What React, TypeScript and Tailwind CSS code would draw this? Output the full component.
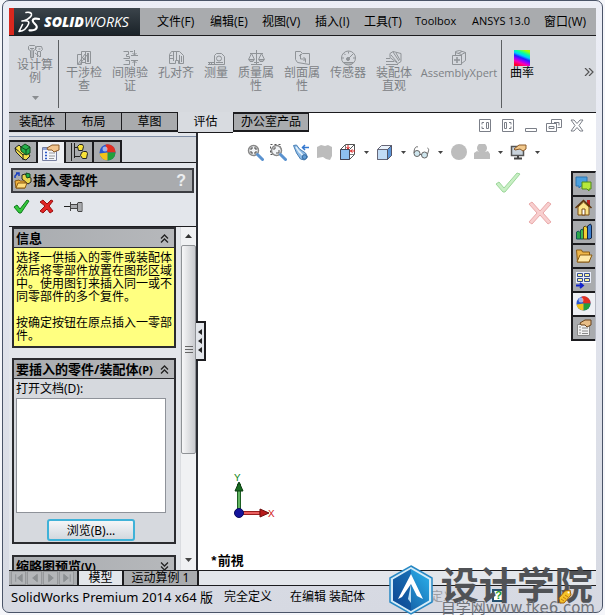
import type { ReactNode } from "react";

const GRAY = "#8f9397";

function Svg({ w = 16, h = 16, vb, children, className = "" }: { w?: number; h?: number; vb?: string; children: ReactNode; className?: string }) {
  return (
    <svg width={w} height={h} viewBox={vb ?? `0 0 ${w} ${h}`} fill="none" className={`shrink-0 ${className}`} aria-hidden="true">
      {children}
    </svg>
  );
}

function Logo() {
  return (
    <div className="flex h-full w-[131px] shrink-0 items-center border-l-[5px] border-[#d9281e] bg-gradient-to-b from-[#3b444b] to-[#1b2329] pl-1">
      <Svg w={22} h={22}>
        <g stroke="#fff" strokeLinecap="round" strokeLinejoin="round">
          <path d="M8 1.500C11 1 14 1.500 13.500 4 13 6 10 8 7 9.500" strokeWidth="1.600" />
          <path d="M4 10C8 9 12 10 10.500 13 9 17 5 20 1 20.500L4.500 13.500" strokeWidth="1.600" />
          <path d="M21 8c-3-.8-6-.5-6.300 1.500C14.500 12 19 13.500 18.800 16 18.500 19 15 19.600 11.500 19.300" strokeWidth="2.200" />
        </g>
      </Svg>
      <span className="pl-1 font-['Open_Sans','Noto_Sans',sans-serif] text-[14px] leading-[20px] text-white italic">
        <b className="font-extrabold">SOLID</b>WORKS
      </span>
    </div>
  );
}

const menus = [
  { t: "文件(F)", w: "w-[53px]" },
  { t: "编辑(E)", w: "w-[52px]" },
  { t: "视图(V)", w: "w-[53px]" },
  { t: "插入(I)", w: "w-[49px]" },
  { t: "工具(T)", w: "w-[51px]" },
  { t: "Toolbox", w: "w-[57px]", small: true },
  { t: "ANSYS 13.0", w: "w-[72px]", small: true },
  { t: "窗口(W)", w: "w-[48px]" },
];

const g = { stroke: GRAY, strokeWidth: 1 };

const icons: Record<string, ReactNode> = {
  study: (
    <g {...g}>
      <path d="M1.500 1.500l1-1h5l1 1v3l-2 1v7h-3v-7l-2-1zM3 3.500h4M5 3v9M9.500 1.500h5l1 3-2 2h-3l-2-2zM11.500 4h2M10.500 7v5M13.500 7v5M8 8l5 4" />
    </g>
  ),
  interference: (
    <g {...g}>
      <path d="M1.500 4.500h4v10h-4zM5.500 1.500h4v11h-4zM9.500 1.500h5v12h-5zM2 14L9 4M3 15l8-10M11.500 3v9M12.500 3v9M6 7l3 3" />
    </g>
  ),
  clearance: (
    <g {...g}>
      <path d="M1.500 1.500h5v3h-2v2h3v2h-6M1.500 14.500h6v-4h-4M9 5.500h7M9 10.500h7M12.500 0v5M12.500 11v5M10.500 3l2 2 2-2M10.500 13l2-2 2 2M8 1.500h3" />
    </g>
  ),
  hole: (
    <g {...g}>
      <path d="M1.500 13.500v-9l2-3h8l4 4v8h-5v-3h-3v3zM5.500 2v9M8.500 2v8M11.500 5v8M13.500 6v6M1.500 5.500h3M1.500 8.500h4" />
    </g>
  ),
  measure: (
    <g {...g}>
      <path d="M6.500 14.500v-9l2-2h5l3 3v8zM0 14.500h7M0 12.500h6M1.500 12v2M3.500 12v2" />
      <circle cx="11" cy="8.500" r="2.500" />
      <path d="M8 12.500h7" />
    </g>
  ),
  mass: (
    <g {...g}>
      <path d="M8.500 0v14M2 3.500h13M3.500 3.500l-3 6h6zM13.500 3.500l-3 6h6zM1 10h5l-1 1.500H2zM11 10h5l-1 1.500h-3zM3 14.500h11M6 12.500h5" />
    </g>
  ),
  section: (
    <g {...g}>
      <path d="M1.500 1.500h5l2 2h7v11l-12-2-2-3zM5 6l3-2M6.500 4v5h5M9.500 7l2 2-2 2M11.500 12.500V9" />
    </g>
  ),
  sensor: (
    <g {...g}>
      <circle cx="8.500" cy="8" r="7" />
      <path d="M8 9l5-5M8.500 1.500v2M2 8h2M15 8h-2M4 3.500L5.500 5M3.500 12.500h10M5 14h7" />
      <circle cx="8" cy="9" r="1.500" fill={GRAY} />
    </g>
  ),
  visual: (
    <g {...g}>
      <path d="M4 3.500l3-2 8 2v8l-3 2-8-6zM7 2l6 9M10 3l4 7M5 5l6 7M0 8.500h4M0 11.500h8M0 14.500h12" />
    </g>
  ),
  xpert: (
    <g {...g}>
      <path d="M1.500 5.500h9v9h-9zM4.500 5V1.500l4-1 6 2v8l-4 3M4.500 2.500l6 2 4-2M10.500 4.500v2M7 3.500l4-2" />
      <path d="M3 10h6M6 7v6" strokeWidth="1.500" />
    </g>
  ),
};

const tools = [
  { i: "interference", l: ["干涉检", "查"], w: "w-[46px]" },
  { i: "clearance", l: ["间隙验", "证"], w: "w-[46px]" },
  { i: "hole", l: ["孔对齐"], w: "w-[46px]" },
  { i: "measure", l: ["测量"], w: "w-[34px]" },
  { i: "mass", l: ["质量属", "性"], w: "w-[46px]" },
  { i: "section", l: ["剖面属", "性"], w: "w-[46px]" },
  { i: "sensor", l: ["传感器"], w: "w-[46px]" },
  { i: "visual", l: ["装配体", "直观"], w: "w-[46px]" },
  { i: "xpert", l: ["AssemblyXpert"], w: "w-[84px]" },
];

function Ribbon() {
  return (
    <div className="flex h-[76px] shrink-0 bg-[#d6d9de] text-[12px] leading-[13px] text-[#7d8185]">
      <button className="flex w-[49px] flex-col items-center pt-[9px] pl-[3px]">
        <Svg w={17} h={13}>{icons.study}</Svg>
        <span className="flex flex-col"><span>设计算</span><span>例</span></span>
        <Svg w={7} h={4} className="mt-3"><path d="M0 0h7L3.500 4z" fill="#8a8d90" /></Svg>
      </button>
      <div className="my-1 mr-[2px] w-px bg-[#5c5f62]" />
      {tools.map((t) => (
        <button key={t.i} className={`flex shrink-0 flex-col items-center pt-[14px] ${t.w}`}>
          <Svg w={17} h={16}>{icons[t.i]}</Svg>
          {t.l.map((x) => (
            <span key={x} className={t.i === "xpert" ? "font-['Open_Sans','Noto_Sans',sans-serif] text-[11px]" : ""}>{x}</span>
          ))}
        </button>
      ))}
      <div className="my-1 w-px bg-[#5c5f62]" />
      <button className="flex w-10 shrink-0 flex-col items-center pt-[14px] text-black">
        <Svg>
          <defs>
            <linearGradient id="curv" x1="0.700" y1="0" x2="0.300" y2="1">
              <stop offset="0" stopColor="#af0" /><stop offset=".22" stopColor="#0fa" /><stop offset=".36" stopColor="#0cf" />
              <stop offset=".5" stopColor="#22f" /><stop offset=".65" stopColor="#90f" /><stop offset=".8" stopColor="#f0a" /><stop offset="1" stopColor="#f02" />
            </linearGradient>
          </defs>
          <path d="M0 0h16v16H0z" fill="url(#curv)" />
        </Svg>
        <span>曲率</span>
      </button>
      <button className="ml-auto flex w-[14px] items-center justify-center pb-1" aria-label="更多">
        <Svg w={10} h={8}><path d="M1 0l4 4-4 4M5 0l4 4-4 4" stroke="#555" strokeWidth="1.200" /></Svg>
      </button>
    </div>
  );
}

function Tabs() {
  const base = "h-5 shrink-0 border-r border-b-2 border-[#1c1c1f] bg-[#a9abae] text-center";
  return (
    <div className="flex h-[21px] shrink-0 bg-white text-[12px] leading-[16px] text-black">
      <div className="flex bg-[#d8dbe0]">
        <button className={`w-[57px] border-t ${base}`}>装配体</button>
        <button className={`w-14 border-t ${base}`}>布局</button>
        <button className={`w-14 border-t ${base}`}>草图</button>
        <button className="h-[22px] w-[55px] shrink-0 border-b-2 border-[#1c1c1f] bg-[#d8dbe0]">评估</button>
      </div>
      <button className={`w-[76px] border-t-2 border-l ${base}`}>办公室产品</button>
      <div className="flex flex-1 items-end justify-end gap-2 border-t border-[#1c1c1f] pr-3 pb-px">
        {[0, 1].map((k) => (
          <button key={k} aria-label={k ? "右侧窗格" : "左侧窗格"} className={k ? "mr-px" : "mr-px"}>
            <Svg w={14} h={13} className={k ? "-scale-x-100" : ""}>
              <path d="M1.500.5h11v12h-11zM4 5.500V3.500h2M4 7.500v2h2M8.500 3.500h2v6h-2z" stroke="#7b7f88" />
            </Svg>
          </button>
        ))}
        <button aria-label="最小化"><Svg w={14} h={13}><path d="M1.500 9.500h11v3h-11z" stroke="#7b7f88" /></Svg></button>
        <button aria-label="还原"><Svg w={16} h={13}><path d="M5.500 4V.5h10v8h-4M8 3.500h5v3M.5 4.500h10v8H.5zM3 7.500h5v2H3z" stroke="#7b7f88" /></Svg></button>
        <button aria-label="关闭"><Svg w={14} h={13}><path d="M1 1h3l3 3.500L10 1h3L9 6.500l4 5.500h-3L7 8.500 4 12H1l4-5.500z" stroke="#7b7f88" /></Svg></button>
      </div>
    </div>
  );
}

function PartIcon() {
  return (
    <>
      <path d="M1 5l4-3 2 2v3l7 3 2 3-4 4-3-1-7-7z" fill="#f3e04c" stroke="#222" />
      <path d="M1 5l8 7v5M9 12l5-3" stroke="#222" />
      <path d="M7 4l4-3 5 3v6l-4 2-5-4z" fill="#23b04a" stroke="#124a1c" />
      <path d="M7 4l5 3v5M12 7l4-3" stroke="#124a1c" />
    </>
  );
}

function HandList() {
  return (
    <>
      <path d="M.5 3.500h14v13H.5z" fill="#f3f5fb" stroke="#777fa0" />
      <path d="M1 4h13v2H1z" fill="#8fa4d8" />
      <path d="M3 8.500h2M3 11.500h2M3 14.500h2" stroke="#2c59c8" strokeWidth="1.600" />
      <path d="M7 9h6M7 12h6M7 14.500h5" stroke="#9a9a9a" />
      <path d="M5 4l5-3h7v5l-5 2-2-2H6z" fill="#f2c48d" stroke="#8a5a2a" />
    </>
  );
}

function Ball({ r = 8 }: { r?: number }) {
  const c = 8.5;
  return (
    <>
      <circle cx={c} cy={c} r={r} fill="#2a56d0" />
      <path d={`M${c} ${c}L${c - 2} ${c - r}A${r} ${r} 0 0 1 ${c + r} ${c}z`} fill="#e22f22" />
      <path d={`M${c} ${c}L${c + r} ${c}A${r} ${r} 0 0 1 ${c} ${c + r}z`} fill="#22a03a" />
      <path d={`M${c} ${c}L${c} ${c + r}A${r} ${r} 0 0 1 ${c - r} ${c + 1}z`} fill="#f2c21a" />
      <circle cx="6" cy="5" r="2.500" fill="#fff" opacity=".55" />
    </>
  );
}

function Chevrons({ up = true }: { up?: boolean }) {
  return (
    <Svg w={9} h={9}>
      <path d={up ? "M1 4.500L4.500 1 8 4.500M1 8.500L4.500 5 8 8.500" : "M1 .5L4.500 4 8 .5M1 4.500L4.500 8 8 4.500"} stroke="#222" strokeWidth="1.300" />
    </Svg>
  );
}

function GroupHeader({ children, up = true }: { children: ReactNode; up?: boolean }) {
  return (
    <button className="flex h-[18px] w-full shrink-0 items-center justify-between bg-gradient-to-r from-[#a9acb0] to-[#b6b8bb] pr-[5px] pl-[2px] text-left text-[13px] font-bold whitespace-nowrap">
      <span>{children}</span>
      <Chevrons up={up} />
    </button>
  );
}

function Panel() {
  const tab = "flex w-7 items-center justify-center border-t-2 border-r-2 border-[#1c1c1f]";
  return (
    <aside className="relative flex w-[189px] shrink-0 flex-col border-r-2 border-[#2b2d33] bg-[#e3e6eb] text-[12px] leading-[13px] text-black">
      <div className="mt-[3px] h-px shrink-0 bg-[#7f8ea6]" />
      <div className="flex h-[26px] shrink-0 items-end border-b border-[#1c1c1f] bg-[#d6d9de]">
        <div className="flex h-[22px] border-l border-[#1c1c1f]">
          <button className={`${tab} bg-[#a9abae]`} aria-label="特征"><Svg w={18} h={18}><PartIcon /></Svg></button>
          <button className={`${tab} h-[23px] bg-[#eef0f4]`} aria-label="属性"><Svg w={18} h={17}><HandList /></Svg></button>
          <button className={`${tab} bg-[#a9abae]`} aria-label="配置">
            <Svg w={18} h={18}>
              <path d="M1.500 0v18M4.500 0v15M5 4.500h3M5 13.500h5" stroke="#222" />
              <path d="M7.500 3.500l2-2h3l1 2-1 4h-4zM11.500 9.500l2-1h3l1 2-1 5h-4l-2-3z" fill="#f8e23a" stroke="#222" />
            </Svg>
          </button>
          <button className={`${tab} bg-[#a9abae]`} aria-label="外观"><Svg w={17} h={17}><Ball /></Svg></button>
        </div>
      </div>
      <div className="mx-[2px] mt-[5px] flex h-[25px] shrink-0 items-center border-2 border-[#3c3d42] bg-[#a9abae] pr-[6px] pl-px">
        <Svg w={18} h={18}>
          <path d="M1 6V4l3-3M2 1h3v3" stroke="#1a3fc0" strokeWidth="1.500" />
          <path d="M8 3l3-1 2 2 4 2v4l-3 2-6-5z" fill="#e8d54a" stroke="#222" />
          <path d="M12 1l4 1v3l-3 1-1-2z" fill="#23b04a" stroke="#124a1c" />
          <path d="M1 9l4-1 1 1h5v7H2z" fill="#f3b33c" stroke="#8a5a12" />
          <path d="M2 16l2-5h9l-2 5z" fill="#ffdc7a" stroke="#8a5a12" />
        </Svg>
        <h2 className="pl-px text-[13px] font-bold">插入零部件</h2>
        <button className="ml-auto font-['Liberation_Sans',sans-serif] text-[16px] font-bold text-[#eceef0]">?</button>
      </div>
      <div className="flex h-[34px] shrink-0 items-start gap-[9px] border-b border-[#1c1c1f] pt-[6px] pl-[4px]">
        <button aria-label="确定"><Svg w={17} h={15}><path d="M1 8l3-2 3 4L14 1l2 1L8 14H6z" fill="#35c83a" stroke="#0d7a1c" /></Svg></button>
        <button aria-label="取消"><Svg w={15} h={15}><path d="M1 3l3-2 4 4 4-4 2 1-4 5 4 5-3 2-3-4-4 4-3-2 5-5z" fill="#e02525" stroke="#9a0f0f" /></Svg></button>
        <button aria-label="图钉" className="pl-px">
          <Svg w={19} h={15}><path d="M0 7.500h6" stroke="#222" /><path d="M6.500 3v9M7 5.500h6M7 9.500h6M13.500 4v8M14 3.500h4v9h-4z" stroke="#444" /><path d="M7 6h6v3H7zM14 4h3v8h-3z" fill="#a8aaad" /></Svg>
        </button>
      </div>
      <div className="flex min-h-0 flex-1">
        <div className="flex min-w-0 flex-1 flex-col overflow-hidden pl-[3px]">
          <section className="shrink-0 border-2 border-[#2b2c30]">
            <GroupHeader>信息</GroupHeader>
            <div className="h-[99px] border-t border-[#2b2c30] bg-[#ffff80] pt-[3px] pl-[2px] whitespace-nowrap">
              <p>选择一供插入的零件或装配体</p>
              <p>然后将零部件放置在图形区域</p>
              <p>中。使用图钉来插入同一或不</p>
              <p>同零部件的多个复件。</p>
              <p className="pt-[13px]">按确定按钮在原点插入一零部</p>
              <p>件。</p>
            </div>
          </section>
          <section className="mt-[10px] shrink-0 border-2 border-[#2b2c30] bg-[#d6d9de]">
            <GroupHeader>要插入的零件/装配体<span className="text-[11px]">(P)</span></GroupHeader>
            <div className="flex h-[164px] flex-col border-t border-[#2b2c30] px-[2px] pt-[3px]">
              <label htmlFor="docs">打开文档(D):</label>
              <select id="docs" size={5} className="mt-[3px] h-[115px] w-[150px] appearance-none border border-[#8e9299] bg-white" />
              <button className="mt-[6px] ml-[31px] h-[22px] w-[88px] rounded-[3px] border-2 border-[#3fb2d8] bg-gradient-to-b from-[#f4f6f8] to-[#d3d8de]">浏览(B)...</button>
            </div>
          </section>
          <section className="mt-[11px] min-h-0 flex-1 overflow-hidden border-2 border-b-0 border-[#2b2c30]">
            <GroupHeader up={false}>缩略图预览<span className="text-[11px]">(V)</span></GroupHeader>
          </section>
        </div>
        <div className="ml-[4px] flex w-4 flex-col items-center border-l border-[#dadce0] bg-[#f0f1f3]">
          <Svg w={7} h={18}><path d="M0 11h7L3.500 7z" fill="#333" /></Svg>
          <div className="flex h-[209px] w-[15px] items-center justify-center rounded-[2px] border border-[#8f9296] bg-gradient-to-r from-[#f7f7f8] to-[#c9cbcf]">
            <Svg w={8} h={8}><path d="M0 .5h8M0 3.500h8M0 6.500h8" stroke="#666" /></Svg>
          </div>
          <Svg w={7} h={18} className="mt-auto"><path d="M0 6h7l-3.500 4z" fill="#444" /></Svg>
        </div>
      </div>
      <button aria-label="折叠面板" className="absolute top-[188px] -right-[10px] z-10 flex h-[40px] w-[10px] items-center justify-center border-2 border-l-0 border-[#1c1c1f] bg-[#e3e6eb]">
        <Svg w={4} h={24}><path d="M4 0v6L0 3zM4 9v6l-4-3zM4 18v6l-4-3z" fill="#222" /></Svg>
      </button>
    </aside>
  );
}

function Down() {
  return <Svg w={5} h={3}><path d="M0 0h5L2.500 3z" fill="#444" /></Svg>;
}

function ViewTools() {
  const lens = (
    <>
      <circle cx="6.500" cy="6.500" r="5" fill="#f2f4f6" stroke="#888" strokeWidth="1.500" />
      <path d="M10.500 10.500l5 5" stroke="#5a92cf" strokeWidth="3" strokeLinecap="round" />
    </>
  );
  const cell = "flex w-[23px] justify-center";
  const arrow = "flex w-[14px] justify-center";
  return (
    <div className="flex h-[38px] shrink-0 items-center pl-[46px]">
      <button className={cell} aria-label="整屏显示全图"><Svg w={17} h={17}>{lens}<path d="M4 6V4h2M9 7v2H7M7 4h2v2M4 7v2h2" stroke="#444" /></Svg></button>
      <button className={cell} aria-label="局部放大"><Svg w={17} h={17}><path d="M.5.500h10v10H.5z" stroke="#555" strokeDasharray="2 2" />{lens}<path d="M4 6V4h2M9 6v3H6" stroke="#555" /></Svg></button>
      <button className={cell} aria-label="上一视图">
        <Svg w={17} h={17}><path d="M.5 1.500l3-.5 3 4 6 4 2 4-3 3-4-1-4-6z" fill="#8dbbe6" stroke="#4a7fb4" /><path d="M3 3l4 6M6 7l5 6" stroke="#e4f1fb" strokeWidth="1.500" /><circle cx="11.500" cy="13" r="2.300" fill="#5d9ad4" stroke="#37699c" /><path d="M9 3.500h7M12 1L9.500 3.500 12 6" stroke="#3478d0" strokeWidth="1.500" /></Svg>
      </button>
      <button className={cell} aria-label="剖面视图"><Svg w={15} h={16}><path d="M0 3l4-2 4 1 3-1 4 2v9l-2 4-4-1-3-2-6 1z" fill="#bcbcbc" /></Svg></button>
      <button className={cell} aria-label="视图定向">
        <Svg w={17} h={17}><path d="M1.500 5.500l5-5h9v10l-5 5h-9zM10.500 5.500l5-5" stroke="#555" /><path d="M6.500.500v5M15.500 10.500h-5" stroke="#777" /><path d="M1.500 5.500h9v10h-9z" fill="#8dbff0" stroke="#445" /><path d="M9 1v4M7.500 3L9 5l1.500-2M16 7h-5M13.500 5.500L11.500 7l2 1.500" stroke="#d22" /></Svg>
      </button>
      <span className={arrow}><Down /></span>
      <button className={cell} aria-label="显示样式">
        <Svg w={17} h={17}><path d="M1.500 5.500l4-4h10v10l-4 4h-10z" fill="#e9f2fb" stroke="#667" /><path d="M1.500 5.500h10v10h-10z" fill="#c2dcf6" stroke="#667" /><path d="M11.500 5.500l4-4v10l-4 4z" fill="#5b95d8" stroke="#556" /></Svg>
      </button>
      <span className={arrow}><Down /></span>
      <button className={cell} aria-label="隐藏/显示项目">
        <Svg w={17} h={14}><circle cx="4" cy="8.500" r="3" fill="#cfe6ee" stroke="#666" /><circle cx="11.500" cy="10" r="3" fill="#cfe6ee" stroke="#666" /><path d="M7 9.500h1.500M1 8c0-5 2-7 4-6M14.500 9c1-3 2-5 0-6" stroke="#666" /></Svg>
      </button>
      <span className={arrow}><Down /></span>
      <button className={cell} aria-label="编辑外观"><Svg><circle cx="8" cy="8" r="8" fill="#bdbdbd" /></Svg></button>
      <button className={cell} aria-label="应用布景"><Svg><path d="M0 15V9l3-2 2 1a5 5 0 1 1 6 0l3-1 2 3v5z" fill="#bdbdbd" /></Svg></button>
      <span className={arrow}><Down /></span>
      <button className={cell} aria-label="视图设定">
        <Svg w={17} h={16}><path d="M1.500 2.500h12v9h-12z" fill="#c9d3dc" stroke="#555" strokeWidth="1.500" /><path d="M4 14.500h8M8 12v2" stroke="#444" strokeWidth="2" /><path d="M4 5l5-4h7v4l-3 2-3-2-5 1z" fill="#f2c98c" stroke="#8a5a2a" /></Svg>
      </button>
      <span className={arrow}><Down /></span>
    </div>
  );
}

const paneIcons: { n: string; on?: boolean; d: ReactNode }[] = [
  { n: "论坛", d: <><path d="M1 2h11v9H6l-2 2v-2H1z" fill="#4aa0de" stroke="#2c74b0" /><path d="M7 7h9v7h-2v2l-2-2H7z" fill="#b6e83c" stroke="#4f8a1a" /></> },
  { n: "资源", d: <><path d="M12 1h3v6h-3z" fill="#b22" /><path d="M3 8l5.500-5L14 8v8H3z" fill="#fbe38a" stroke="#7a4b10" /><path d="M.5 9l8-7.500 8 7.500" stroke="#5a3208" strokeWidth="1.500" /><path d="M7 10h3v6H7z" fill="#fff" stroke="#7a4b10" /></> },
  { n: "设计库", d: <><path d="M1.500 9l2-1 2 2v6h-4z" fill="#2ba84a" stroke="#155" /><path d="M5.500 7l2-1 1 2v8h-3z" fill="#3fba4f" stroke="#155" /><path d="M8.500 4l2-1 2 2v11h-4z" fill="#f1cf36" stroke="#541" /><path d="M12.500 3l3-2 1 2v12l-2 1h-2z" fill="#3b7fd0" stroke="#124" /></> },
  { n: "文件探索器", d: <><path d="M1.500 3h5l1 2h7v10h-12z" fill="#eeb649" stroke="#8a5a12" /><path d="M2 15l3-7h12l-3 7z" fill="#ffe9a8" stroke="#8a5a12" /></> },
  { n: "视图调色板", d: <><path d="M1 1h15v11H1z" fill="#e9eefb" /><path d="M2.500 2.500h5v3h-5zM9.500 2.500h5v3h-5zM2.500 7.500h5v3h-5zM9.500 7.500h5v3h-5z" fill="#f8ef9b" stroke="#334b8e" /><path d="M1 14.500h6M5 12l3 2.500L5 17" stroke="#1122cc" strokeWidth="1.800" /></> },
  { n: "外观", on: true, d: <Ball r={7} /> },
  { n: "自定义属性", d: <><path d="M2.500 5.500h12v11h-12z" fill="#f2f2f2" stroke="#888" /><path d="M4 8h2M4 11h2M4 14h2M7 9h6M7 12h6M7 14.500h6" stroke="#888" /><path d="M5 4l5-3h6v5l-4 2-2-2H6z" fill="#e8bd86" stroke="#6a431a" /></> },
];

function Canvas() {
  return (
    <main className="flex min-w-0 flex-1 flex-col bg-white">
      <ViewTools />
      <div className="flex min-h-0 flex-1 items-stretch">
        <div className="relative flex-1">
          <button className="absolute top-px right-[50px]" aria-label="确认"><Svg w={26} h={22}><path d="M1 12l3-2 5 6L22 1l3 1L10 20H8z" fill="#c8efc4" stroke="#9cd69a" /></Svg></button>
          <button className="absolute top-[30px] right-[19px]" aria-label="放弃"><Svg w={24} h={24}><path d="M1 3l3-2 8 9 8-9 3 2-8 9 8 9-3 2-8-9-8 9-3-2 8-9z" fill="#f8cfcf" stroke="#e9a9a9" /></Svg></button>
          <div className="absolute bottom-[47px] left-[32px]">
            <Svg w={46} h={54}>
              <path d="M7.500 15v29h3V15z" fill="#62b562" stroke="#1c5f22" />
              <path d="M9 13l4 9H5z" fill="#176b20" stroke="#0c3b12" />
              <path d="M12 42.500h18v3H12z" fill="#ea6060" stroke="#9a1d1d" />
              <path d="M39 44l-9-4v8z" fill="#b81a1a" stroke="#6e0d0d" />
              <circle cx="9" cy="44" r="4.500" fill="#14149c" stroke="#0a0a5c" />
              <text x="4" y="12" fontSize="11" fontFamily="Liberation Mono, monospace" fill="#168a22">Y</text>
              <text x="38" y="48" fontSize="11" fontFamily="Liberation Mono, monospace" fill="#d51f1f">X</text>
            </Svg>
          </div>
          <span className="absolute bottom-px left-[12px] font-['Liberation_Mono','Noto_Sans_CJK_SC',monospace] text-[13px] leading-[15px] font-bold text-black">*前視</span>
        </div>
        <nav className="h-[170px] w-[25px] shrink-0 border-t-2 border-r border-l-2 border-[#1c1c1f] border-r-[#b5b8c2]">
          {paneIcons.map((p) => (
            <button key={p.n} aria-label={p.n} className={`flex h-6 w-full items-center justify-center border-b-2 border-[#1c1c1f] ${p.on ? "bg-[#eef0f4]" : "bg-[#a9abae]"}`}>
              <Svg w={18} h={18}>{p.d}</Svg>
            </button>
          ))}
        </nav>
      </div>
    </main>
  );
}

function Bottom() {
  return (
    <div className="flex h-4 shrink-0 border-t border-b border-[#1c1c1f] bg-[#e3e6eb] text-[12px] leading-[14px] text-black">
      <div className="flex w-[68px] gap-px bg-[#a9abae] pl-[2px]">
        {["M4 3v8M11 3L6 7l5 4z", "M10 3L5 7l5 4z", "M5 3l5 4-5 4z", "M4 3l5 4-5 4zM11 3v8"].map((d, i) => (
          <button key={d} aria-label={["首页", "上一页", "下一页", "末页"][i]} className="border border-[#96989b] bg-[#b4b6b9]">
            <Svg w={13} h={12} vb="0 1 14 12"><path d={d} fill="#8d9093" stroke="#8d9093" /></Svg>
          </button>
        ))}
      </div>
      <button className="w-[45px] border-l-2 border-[#1c1c1f] bg-[#e3e6eb]">模型</button>
      <button className="w-[77px] border-r-2 border-l-2 border-[#1c1c1f] bg-[#a9abae]">运动算例 1</button>
    </div>
  );
}

function Status() {
  return (
    <footer className="flex h-[26px] shrink-0 items-start pt-[3px] pl-[2px] text-[12px] leading-[16px] text-black">
      <span className="w-[213px] shrink-0 text-[13px]">SolidWorks Premium 2014 x64 版</span>
      <span className="w-[66px] shrink-0">完全定义</span>
      <span className="w-[129px] shrink-0">在编辑 装配体</span>
      <span className="w-[73px] shrink-0 text-[#9b9da3]">自定义</span>
      <button aria-label="帮助" className="h-[13px] w-[13px] shrink-0 border-2 border-[#24506e] bg-white font-['Liberation_Sans',sans-serif] text-[11px] leading-[9px] font-bold text-[#1a9a2c]">?</button>
      <button aria-label="标签" className="relative z-30 ml-[52px]">
        <Svg w={15} h={15}><path d="M2 9l6-7 5-1 1 5-7 8H3z" fill="#f6c32a" stroke="#a4620c" /><path d="M4 10l3 2M6 8l3 2M8 6l3 2" stroke="#c47a10" /><circle cx="11.500" cy="3.500" r="1" fill="#fff" /></Svg>
      </button>
    </footer>
  );
}

function Watermark() {
  return (
    <div className="pointer-events-none absolute right-[10px] bottom-0 z-20 flex items-end">
      <Svg w={44} h={50} className="mr-2">
        <defs>
          <linearGradient id="hex" x1="0" y1="1" x2="1" y2="0"><stop offset="0" stopColor="#0e4a94" /><stop offset="1" stopColor="#2cb4ee" /></linearGradient>
        </defs>
        <path d="M22 1l21 12v24L22 49 1 37V13z" fill="#d5ecf8" stroke="#2788c4" strokeWidth="1.500" />
        <path d="M22 4l18 10.500v21L22 46 4 35.500v-21z" fill="url(#hex)" />
        <path d="M22 4L4 14.500v21L22 46z" fill="#0c3f8c" opacity=".45" />
        <path d="M22 9l12 25-6-3-6-12-9 13-4 2z" fill="#fff" />
        <path d="M22 19v19l-3-4z" fill="#b8dcf2" />
      </Svg>
      <div className="flex flex-col items-start whitespace-nowrap">
        <span className="font-['Noto_Sans_CJK_SC',sans-serif] text-[38px] leading-[37px] font-bold text-[#505256]">设计学院</span>
        <span className="font-['DejaVu_Sans','Noto_Sans_CJK_SC',sans-serif] text-[15px] leading-[14px] text-[#707379]">自学网www.fke6.com</span>
      </div>
    </div>
  );
}

export default function App() {
  return (
    <div className="relative flex h-screen flex-col bg-[#f5f6fa] px-[2px] pb-[2px] font-['Noto_Sans','Noto_Sans_CJK_SC',sans-serif]">
      <div className="flex min-h-0 flex-1 flex-col rounded-[7px] border border-[#4a5468] bg-gradient-to-b from-[#eceef6] to-[#d6d9e2] px-[6px] pt-[7px]">
        <header className="flex h-7 shrink-0 items-center border-b border-[#1c1c1f] bg-[#a9abae] text-[12px] text-black">
          <Logo />
          <nav className="flex items-center pl-[17px] font-['Open_Sans','Noto_Sans_CJK_SC',sans-serif] whitespace-nowrap">
            {menus.map((m) => (
              <button key={m.t} className={`shrink-0 text-left ${m.w} ${m.small ? "text-[11px]" : ""}`}>{m.t}</button>
            ))}
          </nav>
        </header>
        <Ribbon />
        <Tabs />
        <div className="flex min-h-0 flex-1">
          <Panel />
          <Canvas />
        </div>
        <Bottom />
        <Status />
      </div>
      <Watermark />
    </div>
  );
}
